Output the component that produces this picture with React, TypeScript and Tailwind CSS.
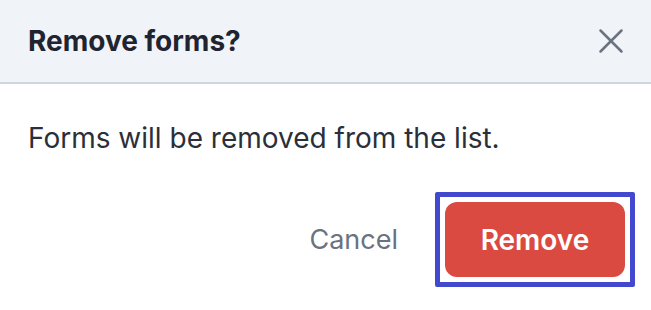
import { X } from 'lucide-react'

export default function App() {
    return (
        <div className="w-[651px] h-[310px] bg-white flex flex-col font-['Inter',sans-serif]">
            {/* Header */}
            <div className="h-[84px] flex items-center justify-between pl-7 pr-[19px] bg-[#f0f3f8] border-b-2 border-[#cfd6df]">
                <h2 className="text-[28px] leading-[34px] font-bold text-[#1f2430]">Remove forms?</h2>
                <X className="w-[42px] h-[42px] text-[#6b7280]" strokeWidth={1.45} />
            </div>

            {/* Body */}
            <div className="pl-7 pt-[37px]">
                <p className="text-[28px] leading-[34px] text-[#2a2f3a]">Forms will be removed from the list.</p>
            </div>

            {/* Footer */}
            <div className="flex items-center justify-end pr-[16px] pt-[37px] gap-[37px]">
                <button className="text-[27px] leading-[34px] text-[#6b7280]">Cancel</button>
                <div className="border-[5px] border-[#4349cf] p-[5px] rounded-[2px]">
                    <button className="w-[180px] h-[75px] rounded-[12px] bg-[#db4a40] text-white text-[28px] leading-[34px] font-semibold block">
                        Remove
                    </button>
                </div>
            </div>
        </div>
    )
}
